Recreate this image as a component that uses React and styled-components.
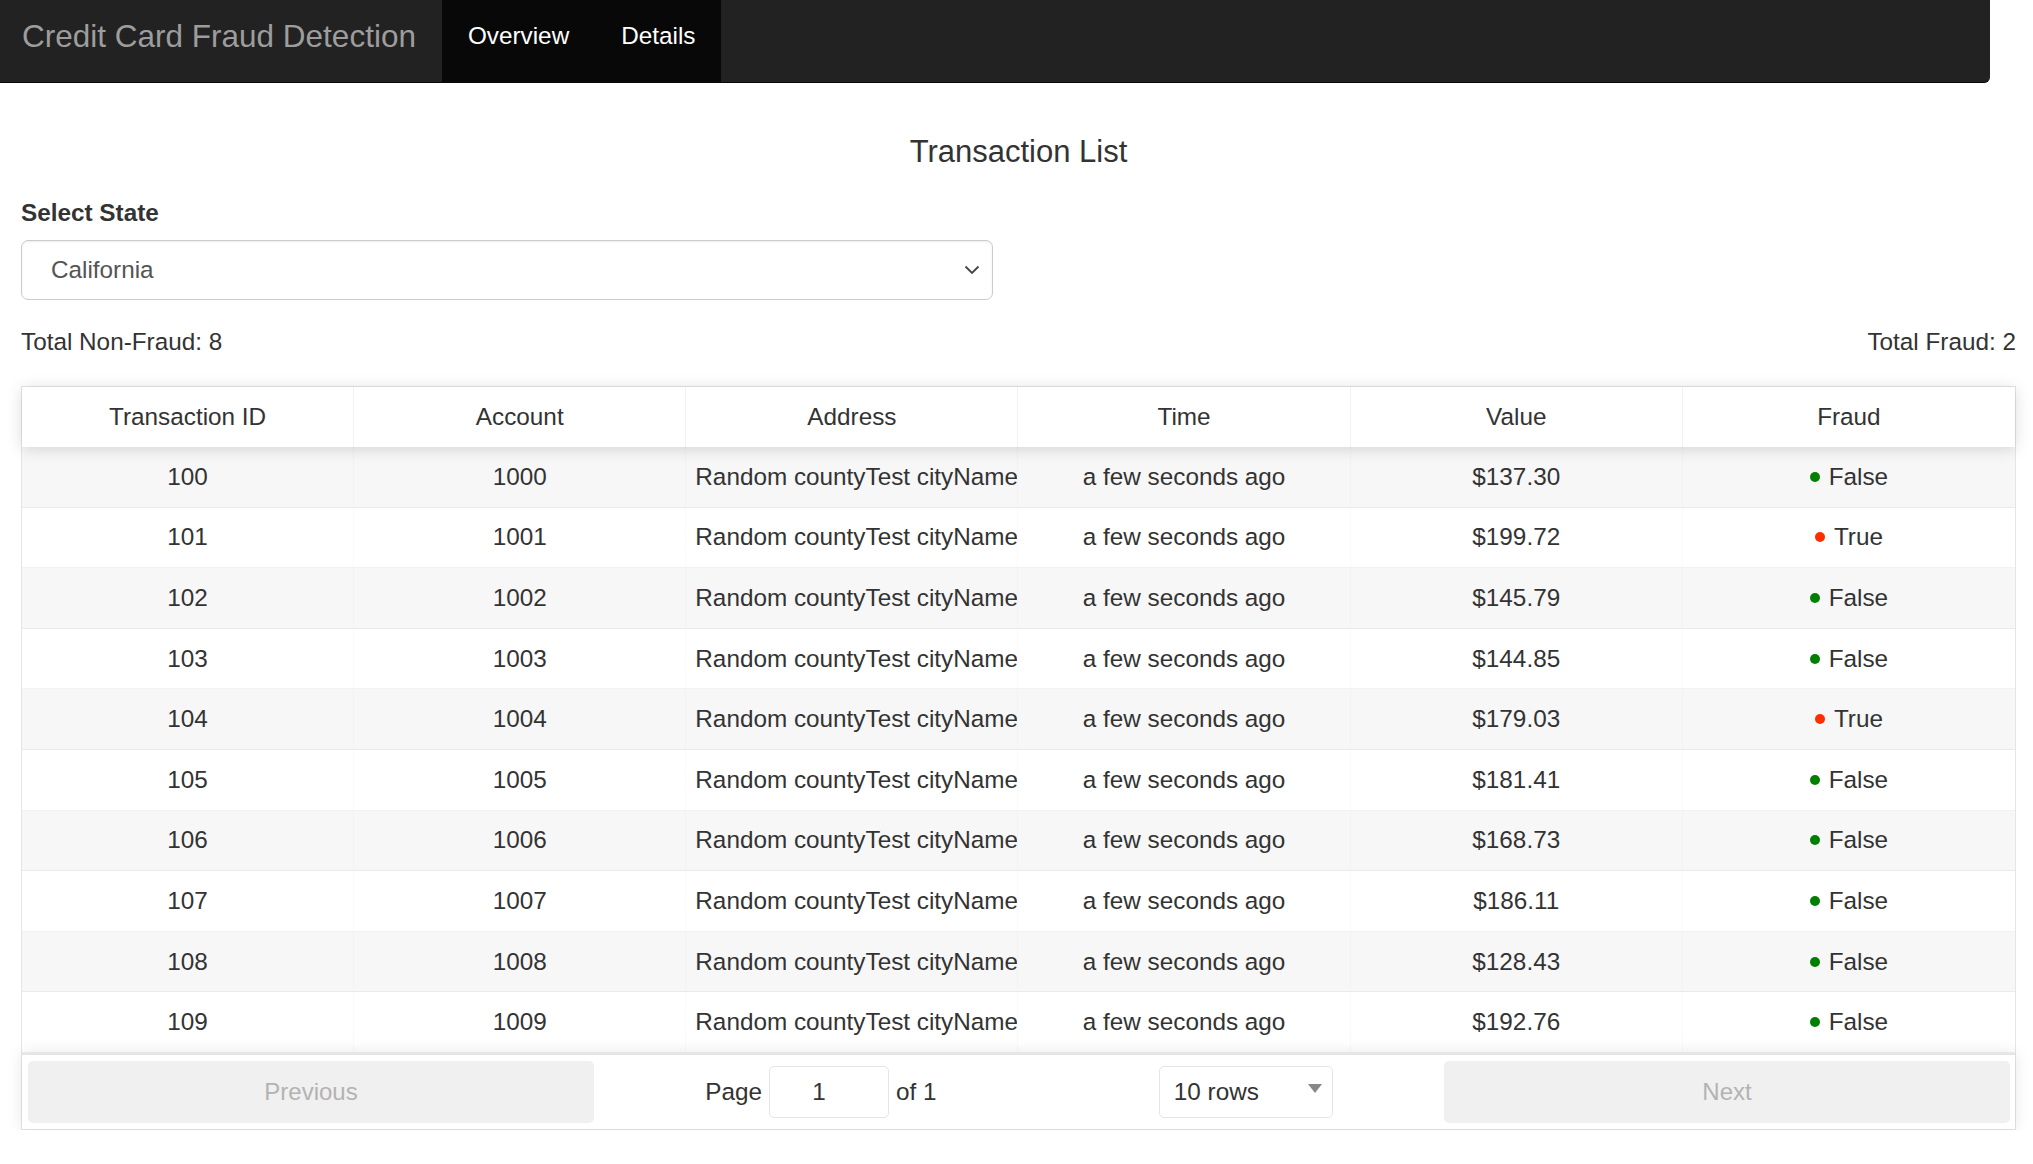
import React from 'react'
import styled, { createGlobalStyle } from 'styled-components'

const GlobalStyle = createGlobalStyle`
  html, body {
    margin: 0;
    padding: 0;
    background: #fff;
  }
  body {
    font-family: "Liberation Sans", Arial, Helvetica, sans-serif;
    font-size: 24.3px;
    color: #333;
  }
  * {
    box-sizing: border-box;
  }
`

const NavBar = styled.nav`
  display: flex;
  align-items: stretch;
  width: 1990px;
  height: 83px;
  background: #222;
  border-bottom: 1px solid #080808;
  border-radius: 0 0 6px 0;
`

const Brand = styled.div`
  display: flex;
  align-items: center;
  padding: 0 26px 10px 22px;
  font-size: 31.5px;
  color: #9d9d9d;
`

const NavList = styled.div`
  display: flex;
  background: #080808;
  padding-bottom: 10px;
`

const NavLink = styled.a`
  display: flex;
  align-items: center;
  padding: 0 26px;
  font-size: 24.3px;
  color: #fff;
  text-decoration: none;
`

const Page = styled.main`
  padding: 0 17px 0 21px;
`

const Title = styled.h4`
  margin: 52px 0 0;
  text-align: center;
  font-size: 31px;
  font-weight: 400;
  line-height: 34px;
  color: #333;
`

const Label = styled.label`
  display: block;
  margin-top: 27px;
  font-weight: 700;
  line-height: 34px;
`

const SelectBox = styled.div`
  display: flex;
  align-items: center;
  justify-content: space-between;
  width: 972px;
  height: 60px;
  margin-top: 10px;
  padding: 0 12px 0 29px;
  border: 1px solid #ccc;
  border-radius: 7px;
  box-shadow: inset 0 1px 2px rgba(0, 0, 0, 0.075);
  color: #555;
`

const Totals = styled.div`
  display: flex;
  justify-content: space-between;
  margin-top: 25px;
  line-height: 34px;
`

const Table = styled.div`
  margin-top: 27px;
  border: 1px solid rgba(0, 0, 0, 0.1);
`

const HeadRow = styled.div`
  position: relative;
  z-index: 1;
  display: grid;
  grid-template-columns: repeat(6, 1fr);
  height: 60px;
  background: #fff;
  box-shadow: 0 2px 15px 0 rgba(0, 0, 0, 0.15);
`

const HeadCell = styled.div`
  display: flex;
  align-items: center;
  justify-content: center;
  border-right: 1px solid rgba(0, 0, 0, 0.05);
  &:last-child {
    border-right: 0;
  }
`

const Row = styled.div`
  display: grid;
  grid-template-columns: repeat(6, 1fr);
  height: 60.6px;
  background: ${p => (p.$odd ? '#f7f7f7' : '#fff')};
  border-bottom: 1px solid rgba(0, 0, 0, 0.05);
  &:last-child {
    border-bottom: 0;
  }
`

const Cell = styled.div`
  display: flex;
  align-items: center;
  justify-content: ${p => (p.$left ? 'flex-start' : 'center')};
  padding: 0 9px;
  overflow: hidden;
  white-space: nowrap;
  border-right: 1px solid rgba(0, 0, 0, 0.02);
  &:last-child {
    border-right: 0;
  }
`

const Dot = styled.span`
  display: inline-block;
  width: 10px;
  height: 10px;
  margin-right: 9px;
  border-radius: 50%;
  background: ${p => (p.$fraud ? '#ff2e00' : '#008000')};
`

const Pagination = styled.div`
  display: flex;
  padding: 6px 5px 6px 6px;
  border-top: 2px solid rgba(0, 0, 0, 0.1);
  box-shadow: 0 0 15px 0 rgba(0, 0, 0, 0.1);
`

const PageButton = styled.button`
  flex: 0 0 566px;
  height: 62px;
  border: 0;
  border-radius: 5px;
  background: #f0f0f0;
  color: #b3b3b3;
  font-family: inherit;
  font-size: 24px;
`

const Center = styled.div`
  flex: 1;
  display: flex;
  align-items: center;
  justify-content: space-around;
`

const PageInfo = styled.div`
  display: flex;
  align-items: center;
  gap: 7px;
`

const PageInput = styled.div`
  width: 120px;
  height: 52px;
  display: flex;
  align-items: center;
  justify-content: center;
  border: 1px solid rgba(0, 0, 0, 0.1);
  border-radius: 5px;
  padding-right: 20px;
`

const RowsSelect = styled.div`
  display: flex;
  align-items: center;
  justify-content: space-between;
  width: 174px;
  height: 52px;
  padding: 0 10px 0 14px;
  border: 1px solid rgba(0, 0, 0, 0.1);
  border-radius: 5px;
`

const Caret = styled.span`
  width: 0;
  height: 0;
  margin-bottom: 6px;
  border-left: 7px solid transparent;
  border-right: 7px solid transparent;
  border-top: 9px solid #888;
`

const rows = [
  [100, '$137.30', false],
  [101, '$199.72', true],
  [102, '$145.79', false],
  [103, '$144.85', false],
  [104, '$179.03', true],
  [105, '$181.41', false],
  [106, '$168.73', false],
  [107, '$186.11', false],
  [108, '$128.43', false],
  [109, '$192.76', false],
]

const headers = ['Transaction ID', 'Account', 'Address', 'Time', 'Value', 'Fraud']

const App = () => (
  <>
    <GlobalStyle />
    <NavBar>
      <Brand>Credit Card Fraud Detection</Brand>
      <NavList>
        <NavLink href="#">Overview</NavLink>
        <NavLink href="#">Details</NavLink>
      </NavList>
    </NavBar>
    <Page>
      <Title>Transaction List</Title>
      <Label>Select State</Label>
      <SelectBox>
        <span>California</span>
        <svg width="16" height="10" viewBox="0 0 16 10">
          <path d="M1.5 1.5 L8 8 L14.5 1.5" fill="none" stroke="#444" strokeWidth="1.8" />
        </svg>
      </SelectBox>
      <Totals>
        <span>Total Non-Fraud: 8</span>
        <span>Total Fraud: 2</span>
      </Totals>
      <Table>
        <HeadRow>
          {headers.map(h => <HeadCell key={h}>{h}</HeadCell>)}
        </HeadRow>
        {rows.map(([id, value, fraud], i) => (
          <Row key={id} $odd={i % 2 === 0}>
            <Cell>{id}</Cell>
            <Cell>{1000 + i}</Cell>
            <Cell $left>Random countyTest cityName</Cell>
            <Cell>a few seconds ago</Cell>
            <Cell>{value}</Cell>
            <Cell>
              <Dot $fraud={fraud} />
              {fraud ? 'True' : 'False'}
            </Cell>
          </Row>
        ))}
        <Pagination>
          <PageButton disabled>Previous</PageButton>
          <Center>
            <PageInfo>
              Page <PageInput>1</PageInput> of 1
            </PageInfo>
            <RowsSelect>
              <span>10 rows</span>
              <Caret />
            </RowsSelect>
          </Center>
          <PageButton disabled>Next</PageButton>
        </Pagination>
      </Table>
    </Page>
  </>
)

export default App
